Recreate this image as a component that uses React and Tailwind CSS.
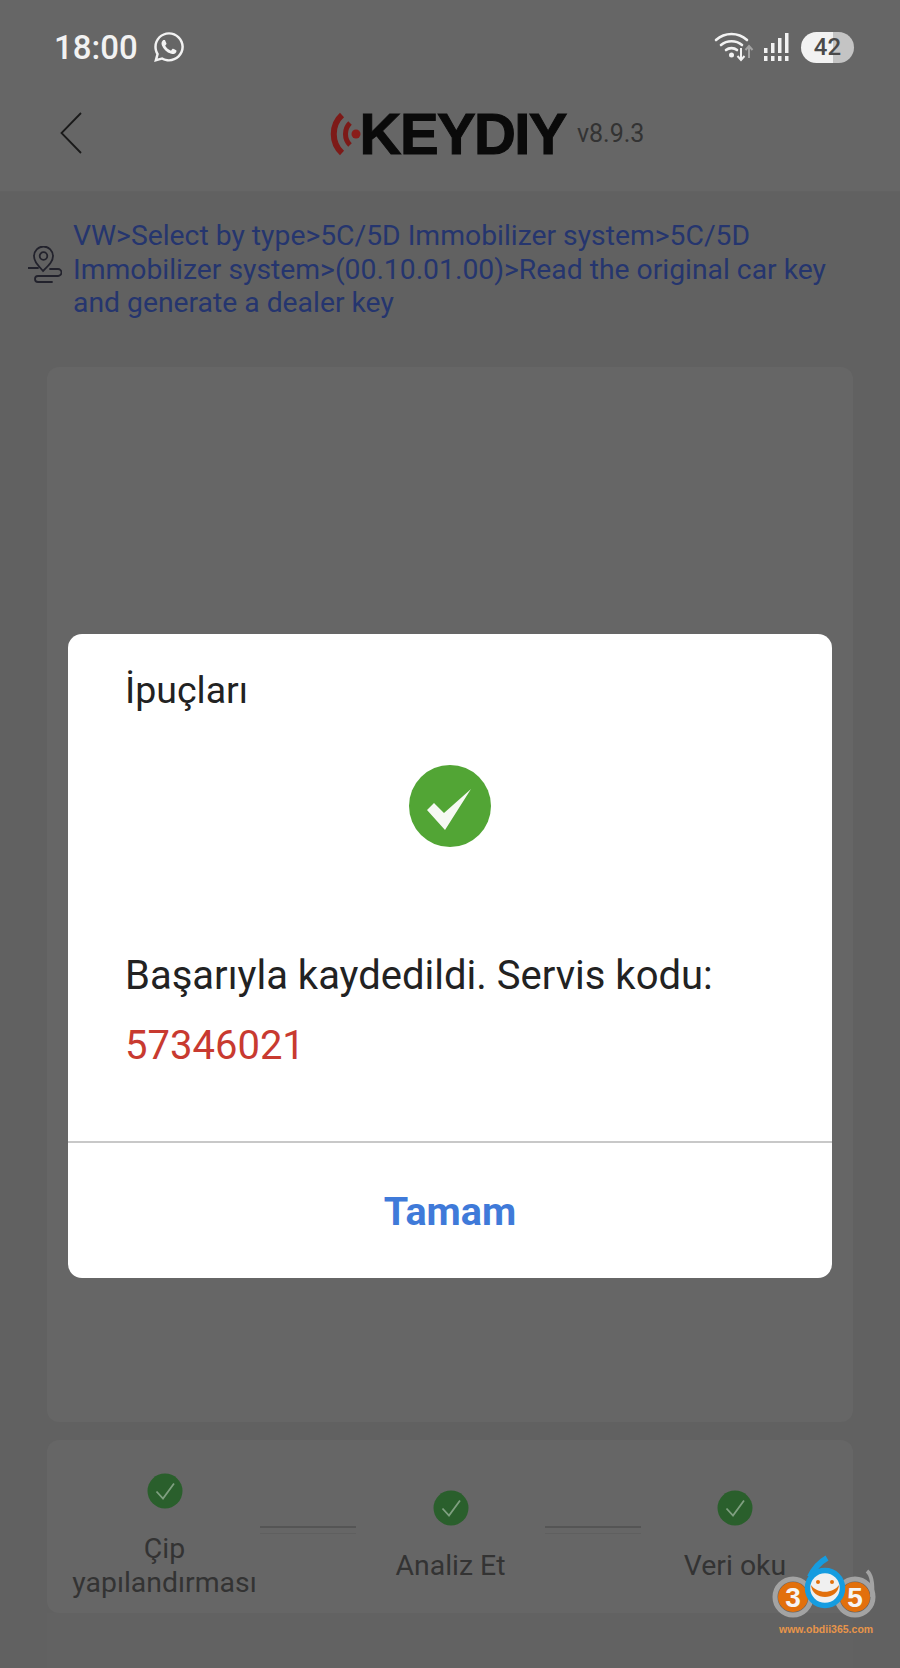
import React from "react";
import { FaWhatsapp } from "react-icons/fa";

const roboto = "font-['Roboto',sans-serif]";

const CheckDot = () => (
  <svg width="36" height="36" viewBox="0 0 36 36" className="shrink-0">
    <circle cx="18" cy="18" r="17.5" fill="#2a5f2c" />
    <path d="M9.5 18.5l6.5 7 11-15" fill="none" stroke="#7f9f80" strokeWidth="1.8" />
  </svg>
);

const Step = ({ label, width }) => (
  <div className={`flex flex-col items-center pt-[20px] ${width}`}>
    <CheckDot />
    <div className="mt-[23px] text-center text-[28.4px] leading-[34px] text-[#333333]">{label}</div>
  </div>
);

const Connector = () => (
  <div className="w-[96px] h-[8px] mt-[6px] shrink-0 border-t-2 border-[#555555] border-b border-b-[#5f5f5f]" />
);

const StatusBar = () => (
  <div className="h-[92px] flex items-center justify-between pl-[54px] pr-[46px] pt-[2px]">
    <div className="flex items-center gap-[14px]">
      <span className="text-[33px] font-medium text-[#f2f2f2] leading-none">18:00</span>
      <FaWhatsapp size={34} className="text-[#f2f2f2]" />
    </div>
    <div className="flex items-center">
      <svg width="42" height="32" viewBox="0 0 42 32" className="mr-[7px]">
        <g fill="none" stroke="#f2f2f2" strokeWidth="2.6" strokeLinecap="round">
          <path d="M2 9c9-8 22-8 31 0" />
          <path d="M7 14c6-5 15-5 21 0" />
          <path d="M12 19c3-2.500 8-2.500 11 0" />
        </g>
        <circle cx="17.500" cy="24" r="2.500" fill="#f2f2f2" />
        <path d="M27 17v12m-3.500-4l3.500 4 3.500-4" fill="none" stroke="#f2f2f2" strokeWidth="2" />
        <path d="M35 27V15m-3.500 4l3.500-4 3.500 4" fill="none" stroke="#a3a3a3" strokeWidth="2" />
      </svg>
      <svg width="26" height="30" viewBox="0 0 26 30" className="mr-[12px]">
        <g fill="#f2f2f2">
          <rect x="1" y="24" width="3.500" height="5" />
          <rect x="8" y="24" width="3.500" height="5" />
          <rect x="15" y="24" width="3.500" height="5" />
          <rect x="22" y="24" width="3.500" height="5" />
          <rect x="1" y="16" width="3.500" height="5" />
          <rect x="8" y="11" width="3.500" height="10" />
          <rect x="15" y="6" width="3.500" height="15" />
          <rect x="22" y="1" width="3.500" height="20" />
        </g>
      </svg>
      <div className="relative w-[53px] h-[31px] rounded-full overflow-hidden flex items-center justify-center bg-[linear-gradient(90deg,#f2f2f2_0,#f2f2f2_60%,#c4c4c4_60%,#c4c4c4_100%)]">
        <span className="text-[24px] font-medium text-[#4a4a4a] leading-none">42</span>
      </div>
    </div>
  </div>
);

const NavBar = () => (
  <div className="relative h-[100px] flex items-start justify-center pt-[13px]">
    <button type="button" className="absolute left-[60px] top-[20px]">
      <svg width="22" height="42" viewBox="0 0 22 42" className="block">
        <path d="M21 1L1.500 21 21 41" fill="none" stroke="#1a1a1a" strokeWidth="1.800" />
      </svg>
    </button>
    <div className="flex items-center pl-[74px]">
      <svg width="32" height="44" viewBox="0 0 32 44" className="shrink-0 mr-[-2px]">
        <g fill="none" stroke="#7d1a18" strokeLinecap="butt">
          <path d="M12 3C1 13 1 31 12 41" strokeWidth="6" />
          <path d="M20 11c-6 6-6 16 0 22" strokeWidth="5" />
        </g>
        <circle cx="26" cy="22" r="4.500" fill="#8a1c1a" />
      </svg>
      <span className="font-['Liberation_Sans',sans-serif] font-bold text-[58px] leading-none tracking-[-1.6px] text-[#0a0a0a] [-webkit-text-stroke:1px_#0a0a0a]">KEYDIY</span>
      <span className="ml-[11px] mt-[-2px] text-[25px] leading-none text-[#333333]">v8.9.3</span>
    </div>
  </div>
);

const Watermark = () => (
  <div className="absolute left-[770px] top-[1555px] w-[110px]">
    <svg width="110" height="66" viewBox="0 0 110 66" className="block">
      <circle cx="23" cy="42" r="18" fill="none" stroke="#a3a3a3" strokeWidth="5" />
      <circle cx="23" cy="42" r="15" fill="#e2700c" />
      <circle cx="85" cy="42" r="18" fill="none" stroke="#a3a3a3" strokeWidth="5" />
      <path d="M97 16c5 4 6 14 5 26" fill="none" stroke="#a3a3a3" strokeWidth="4" />
      <circle cx="85" cy="42" r="15" fill="#e2700c" />
      <text x="23" y="52" textAnchor="middle" fontSize="28" fontWeight="900" fill="#f5f5f5" fontFamily="Liberation Sans">3</text>
      <text x="85" y="52" textAnchor="middle" fontSize="28" fontWeight="900" fill="#f5f5f5" fontFamily="Liberation Sans">5</text>
      <path d="M40 22C44 13 50 7 57 3" fill="none" stroke="#159ce0" strokeWidth="6" />
      <circle cx="55" cy="33" r="17.500" fill="#f0f0f0" stroke="#159ce0" strokeWidth="5.500" />
      <path d="M41 30c1 16 27 16 28 0c-6 9-22 9-28 0z" fill="#e2700c" />
      <circle cx="48" cy="27" r="2" fill="#e2700c" />
      <circle cx="62" cy="27" r="2" fill="#e2700c" />
    </svg>
    <div className="mt-[1px] ml-[9px] font-['Liberation_Sans',sans-serif] font-bold text-[10.500px] leading-[14px] text-[#e8954a] whitespace-nowrap">www.obdii365.com</div>
  </div>
);

const TipDialog = () => (
  <div className="absolute left-[68px] top-[634px] w-[764px] h-[644px] bg-white rounded-[14px] flex flex-col text-[#222222]">
    <div className="pl-[57px] pt-[35px] text-[37.5px] leading-[42px]">İpuçları</div>
    <div className="flex justify-center mt-[54px]">
      <svg width="82" height="82" viewBox="0 0 82 82">
        <circle cx="41" cy="41" r="41" fill="#52a535" />
        <path d="M18 45l7-7 10 10L62 24 36 65z" fill="#f6f9f3" />
      </svg>
    </div>
    <div className="pl-[57px] mt-[95px] text-[40px] leading-[68px]">Başarıyla kaydedildi. Servis kodu:</div>
    <div className="pl-[57px] mt-[2px] text-[40px] leading-[68px] text-[#c83a30]">57346021</div>
    <div className="mt-[61px] h-[2px] bg-[#c8c8c8]" />
    <button type="button" className="flex-1 flex items-center justify-center pt-[2px] text-[39.5px] font-bold text-[#3f7ad9]">Tamam</button>
  </div>
);

export default function App() {
  return (
    <div className={`relative w-[900px] h-[1668px] overflow-hidden bg-[#616161] ${roboto}`}>
      <div className="h-[192px] bg-[#666666] border-b border-b-[#626262]">
        <StatusBar />
        <NavBar />
      </div>

      {/* breadcrumb */}
      <div className="h-[175px] flex pl-[28px] pr-[40px] pt-[27px] items-start">
        <svg width="34" height="38" viewBox="0 0 34 38" className="mt-[27px] shrink-0" fill="none" stroke="#22222c" strokeWidth="1.800">
          <path d="M15 25C9 18 6 15 6 10a9.500 9.500 0 0 1 19 0c0 5-3 8-10 15z" />
          <circle cx="15.500" cy="10" r="3.800" />
          <path d="M0 22h10M22 23h8a3.500 3.500 0 0 1 0 7H10a3 3 0 0 0 0 6h14" strokeLinecap="round" />
        </svg>
        <div className="ml-[11px] text-[28.3px] leading-[33.500px] text-[#25356e]">
          VW&gt;Select by type&gt;5C/5D Immobilizer system&gt;5C/5D Immobilizer system&gt;(00.10.01.00)&gt;Read the original car key and generate a dealer key
        </div>
      </div>

      <div className="mx-[47px] w-[806px] flex flex-col">
        <div className="h-[1055px] rounded-[12px] bg-[#666666]" />
        <div className="mt-[18px] h-[173px] rounded-[12px] bg-[#666666] flex items-center pl-[22px]">
          <Step label={<>Çip<br />yapılandırması</>} width="w-[191px]" />
          <Connector />
          <Step label="Analiz Et" width="w-[189px]" />
          <Connector />
          <Step label="Veri oku" width="w-[188px]" />
        </div>
        <div className="h-[60px] bg-[#626262]" />
      </div>

      <TipDialog />
      <Watermark />
    </div>
  );
}
